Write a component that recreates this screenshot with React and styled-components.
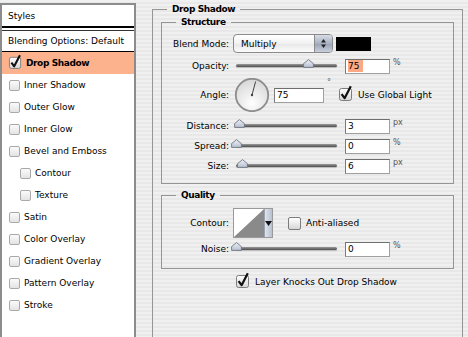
import React from "react";
import styled, { createGlobalStyle } from "styled-components";

const GlobalStyle = createGlobalStyle`
  html, body {
    margin: 0;
    padding: 0;
  }
  body {
    width: 468px;
    height: 337px;
    overflow: hidden;
    font-family: "DejaVu Sans", "Liberation Sans", sans-serif;
    font-size: 9px;
    color: #000;
    background: repeating-linear-gradient(to bottom, #f0f0f0 0 2px, #e8e8e8 2px 4px);
  }
`;

const effects = [
  { name: "Drop Shadow", checked: true, active: true },
  { name: "Inner Shadow" },
  { name: "Outer Glow" },
  { name: "Inner Glow" },
  { name: "Bevel and Emboss" },
  { name: "Contour", indent: true },
  { name: "Texture", indent: true },
  { name: "Satin" },
  { name: "Color Overlay" },
  { name: "Gradient Overlay" },
  { name: "Pattern Overlay" },
  { name: "Stroke" },
];

const App = () => {
  return (
    <>
      <GlobalStyle />
      <Page>
        <StyleList>
          <ListHeader>Styles</ListHeader>
          <ListRow>Blending Options: Default</ListRow>
          {effects.map((fx) => (
            <ListItem key={fx.name} $active={fx.active} $indent={fx.indent}>
              {fx.checked ? <AquaCheck size={11} /> : <SmallBox />}
              <span>{fx.name}</span>
            </ListItem>
          ))}
        </StyleList>

        <Options>
          <OuterGroup>
            <Legend>Drop Shadow</Legend>

            <Group $top={1}>
              <Legend>Structure</Legend>
              <Rows>
                <Row $h={19} $mt={6}>
                  <Label>Blend Mode:</Label>
                  <Select>
                    <SelectText>Multiply</SelectText>
                    <SelectArrows>
                      <svg width="7" height="11" viewBox="0 0 7 11">
                        <path d="M3.5 1 L6 4.5 L1 4.5 Z" fill="#222" />
                        <path d="M3.5 10 L6 6.5 L1 6.5 Z" fill="#222" />
                      </svg>
                    </SelectArrows>
                  </Select>
                  <Swatch />
                </Row>

                <Row $h={16} $mt={5}>
                  <Label>Opacity:</Label>
                  <Slider value={75} />
                  <NumField $selected>
                    <span>75</span>
                  </NumField>
                  <Unit>%</Unit>
                </Row>

                <Row $h={34} $mt={4}>
                  <Label>Angle:</Label>
                  <Dial angle={75} />
                  <NumField $w={50} $ml={3}>
                    <span>75</span>
                  </NumField>
                  <Unit>°</Unit>
                  <CheckLabel $ml={8}>
                    <AquaCheck size={12} />
                    <span>Use Global Light</span>
                  </CheckLabel>
                </Row>

                <Row $h={16} $mt={6}>
                  <Label>Distance:</Label>
                  <Slider value={3} />
                  <NumField>
                    <span>3</span>
                  </NumField>
                  <Unit>px</Unit>
                </Row>

                <Row $h={16} $mt={4}>
                  <Label>Spread:</Label>
                  <Slider value={0} />
                  <NumField>
                    <span>0</span>
                  </NumField>
                  <Unit>%</Unit>
                </Row>

                <Row $h={16} $mt={4}>
                  <Label>Size:</Label>
                  <Slider value={6} />
                  <NumField>
                    <span>6</span>
                  </NumField>
                  <Unit>px</Unit>
                </Row>
              </Rows>
              <Spacer $h={9} />
            </Group>

            <Group $top={5}>
              <Legend>Quality</Legend>
              <Rows>
                <Row $h={30} $mt={7}>
                  <Label>Contour:</Label>
                  <ContourPicker>
                    <svg width="30" height="28" viewBox="0 0 30 28">
                      <rect width="30" height="28" fill="#fff" />
                      <path d="M0 28 L30 0 L30 28 Z" fill="#8a8a8a" />
                    </svg>
                    <ContourArrow>
                      <svg width="7" height="5" viewBox="0 0 7 5">
                        <path d="M0 0 L7 0 L3.5 5 Z" fill="#111" />
                      </svg>
                    </ContourArrow>
                  </ContourPicker>
                  <CheckLabel $ml={15}>
                    <AquaBox />
                    <span>Anti-aliased</span>
                  </CheckLabel>
                </Row>

                <Row $h={16} $mt={3}>
                  <Label>Noise:</Label>
                  <Slider value={0} />
                  <NumField>
                    <span>0</span>
                  </NumField>
                  <Unit>%</Unit>
                </Row>
              </Rows>
              <Spacer $h={11} />
            </Group>

            <KnockOut>
              <CheckLabel>
                <AquaCheck size={12} />
                <span>Layer Knocks Out Drop Shadow</span>
              </CheckLabel>
            </KnockOut>
          </OuterGroup>
        </Options>
      </Page>
    </>
  );
};

const AquaCheck = ({ size }) => (
  <CheckWrap $size={size}>
    <svg width={size + 2} height={size + 4} viewBox="0 0 14 16">
      <defs>
        <linearGradient id="aquaBox" x1="0" y1="0" x2="0" y2="1">
          <stop offset="0" stopColor="#ffffff" />
          <stop offset="1" stopColor="#d6d6d6" />
        </linearGradient>
      </defs>
      <rect x="0.5" y="3.5" width="12" height="12" rx="2" fill="url(#aquaBox)" stroke="#7c7c7c" />
      <path d="M2.6 9.2 L5.6 13.2 L11.8 1.2" fill="none" stroke="#111" strokeWidth="2.2" strokeLinejoin="round" />
    </svg>
  </CheckWrap>
);

const Slider = ({ value }) => {
  const width = 104;
  const left = 3 + (value / 100) * (width - 8) - 5;
  return (
    <SliderBox>
      <Track />
      <Thumb style={{ left: `${left}px` }}>
        <svg width="11" height="9" viewBox="0 0 11 9">
          <defs>
            <linearGradient id="thumbFill" x1="0" y1="0" x2="0" y2="1">
              <stop offset="0" stopColor="#eef2f8" />
              <stop offset="1" stopColor="#b6c0d0" />
            </linearGradient>
          </defs>
          <path d="M5.5 0.6 L10.4 4.6 L10.4 8.4 L0.6 8.4 L0.6 4.6 Z" fill="url(#thumbFill)" stroke="#6f7580" strokeWidth="0.9" />
        </svg>
      </Thumb>
    </SliderBox>
  );
};

const Dial = ({ angle }) => {
  const r = 14;
  const rad = (angle * Math.PI) / 180;
  const x = 19 + r * Math.cos(rad);
  const y = 17 - r * Math.sin(rad);
  return (
    <DialBox>
      <svg width="38" height="34" viewBox="0 0 38 34">
        <defs>
          <radialGradient id="dialFill" cx="0.5" cy="0.75" r="0.7">
            <stop offset="0" stopColor="#ffffff" />
            <stop offset="1" stopColor="#d9d9d9" />
          </radialGradient>
        </defs>
        <circle cx="19" cy="17" r="16.2" fill="url(#dialFill)" stroke="#8d8d8d" strokeWidth="1.8" />
        <line x1="19" y1="17" x2={x} y2={y} stroke="#444" strokeWidth="1" />
        <circle cx="19" cy="17" r="1.2" fill="#444" />
      </svg>
    </DialBox>
  );
};

export default App;

// Styled Components
const Page = styled.div`
  display: flex;
  align-items: flex-start;
  width: 468px;
  height: 337px;
  overflow: hidden;
`;

const StyleList = styled.div`
  width: 132px;
  height: 340px;
  margin-top: 3px;
  flex-shrink: 0;
  background: #fff;
  border: 2px solid #8c8c8c;
  border-bottom: none;
  display: flex;
  flex-direction: column;
`;

const ListHeader = styled.div`
  height: 21px;
  display: flex;
  align-items: center;
  padding-left: 6px;
  border-bottom: 2px solid #000;
  margin-bottom: 2px;
`;

const ListRow = styled.div`
  height: 20px;
  display: flex;
  align-items: center;
  padding-left: 6px;
  border-top: 1px solid #333;
  border-bottom: 1px solid #000;
`;

const ListItem = styled.div`
  height: 22px;
  display: flex;
  align-items: center;
  gap: 4px;
  padding-left: ${(p) => (p.$indent ? 18 : 7)}px;
  background: ${(p) => (p.$active ? "#fcb28d" : "transparent")};
  font-weight: ${(p) => (p.$active ? "bold" : "normal")};
  letter-spacing: ${(p) => (p.$active ? "-0.4px" : "0")};
`;

const SmallBox = styled.span`
  width: 9px;
  height: 9px;
  border: 1px solid #a9a9a9;
  border-radius: 2px;
  background: linear-gradient(#fafafa, #e4e4e4);
  flex-shrink: 0;
`;

const CheckWrap = styled.span`
  display: inline-flex;
  width: ${(p) => p.$size + 2}px;
  height: ${(p) => p.$size}px;
  align-items: flex-end;
  flex-shrink: 0;
  svg {
    display: block;
    overflow: visible;
  }
`;

const Options = styled.div`
  flex: 1;
  padding-left: 16px;
  padding-right: 5px;
`;

const OuterGroup = styled.fieldset`
  margin: 3px 0 0;
  padding: 0;
  height: 360px;
  border: 1px solid #959595;
  border-bottom: none;
  min-width: 0;
  box-sizing: border-box;
`;

const Legend = styled.legend`
  margin-left: 14px;
  padding: 0 5px;
  font-weight: bold;
  letter-spacing: -0.4px;
  line-height: 12px;
`;

const Group = styled.fieldset`
  margin: ${(p) => p.$top}px 8px 0;
  padding: 0;
  border: 1px solid #959595;
  min-width: 0;
`;

const Rows = styled.div`
  display: flex;
  flex-direction: column;
`;

const Spacer = styled.div`
  height: ${(p) => p.$h}px;
`;

const Row = styled.div`
  display: flex;
  align-items: center;
  height: ${(p) => p.$h}px;
  margin-top: ${(p) => p.$mt}px;
`;

const Label = styled.span`
  width: 67px;
  margin-right: 4px;
  text-align: right;
  flex-shrink: 0;
`;

const Select = styled.div`
  width: 100px;
  height: 19px;
  box-sizing: border-box;
  display: flex;
  border: 1px solid #8a8a8a;
  border-radius: 4px;
  overflow: hidden;
  background: linear-gradient(#ffffff, #f1f1f1 50%, #e6e6e6 51%, #fbfbfb);
`;

const SelectText = styled.span`
  flex: 1;
  display: flex;
  align-items: center;
  padding-left: 7px;
`;

const SelectArrows = styled.span`
  width: 17px;
  display: flex;
  align-items: center;
  justify-content: center;
  border-left: 1px solid #8a8a8a;
  background: linear-gradient(#d8dde6, #a9b2c2 50%, #98a2b4 51%, #c9d0dc);
`;

const Swatch = styled.span`
  width: 35px;
  height: 14px;
  margin-left: 3px;
  background: #000;
`;

const SliderBox = styled.div`
  position: relative;
  width: 104px;
  height: 16px;
  margin-right: 8px;
  flex-shrink: 0;
`;

const Track = styled.div`
  position: absolute;
  left: 3px;
  right: 0;
  top: 6px;
  height: 3px;
  border-radius: 2px;
  background: linear-gradient(#9a9a9a, #4e4e4e);
  box-shadow: 0 1px 1px rgba(0, 0, 0, 0.2);
`;

const Thumb = styled.div`
  position: absolute;
  top: 1px;
  width: 11px;
  height: 9px;
  svg {
    display: block;
  }
`;

const NumField = styled.div`
  width: ${(p) => p.$w || 45}px;
  height: 15px;
  margin-left: ${(p) => p.$ml || 0}px;
  box-sizing: border-box;
  background: #fff;
  border: 1px solid #a0a0a0;
  border-top-color: #6e6e6e;
  border-left-color: #7a7a7a;
  display: flex;
  align-items: center;
  padding-left: 2px;
  flex-shrink: 0;
  span {
    background: ${(p) => (p.$selected ? "#fca883" : "transparent")};
    padding-right: ${(p) => (p.$selected ? "4px" : "0")};
    line-height: 12px;
  }
`;

const Unit = styled.span`
  margin-left: 3px;
  color: #555;
  font-size: 8px;
  align-self: flex-start;
`;

const DialBox = styled.div`
  width: 38px;
  height: 34px;
  svg {
    display: block;
  }
`;

const CheckLabel = styled.label`
  display: flex;
  align-items: center;
  gap: 5px;
  margin-left: ${(p) => p.$ml || 0}px;
`;

const AquaBox = styled.span`
  width: 11px;
  height: 11px;
  border: 1px solid #7c7c7c;
  border-radius: 2px;
  background: linear-gradient(#ffffff, #d6d6d6);
`;

const ContourPicker = styled.div`
  width: 40px;
  height: 30px;
  box-sizing: border-box;
  display: flex;
  border: 1px solid #9a9a9a;
  background: #fff;
  svg {
    display: block;
  }
`;

const ContourArrow = styled.span`
  flex: 1;
  display: flex;
  align-items: center;
  justify-content: center;
  border-left: 1px solid #9aa2b0;
  background: linear-gradient(90deg, #dfe4ec, #b8c1d0);
`;

const KnockOut = styled.div`
  display: flex;
  padding-left: 83px;
  margin-top: 7px;
`;
